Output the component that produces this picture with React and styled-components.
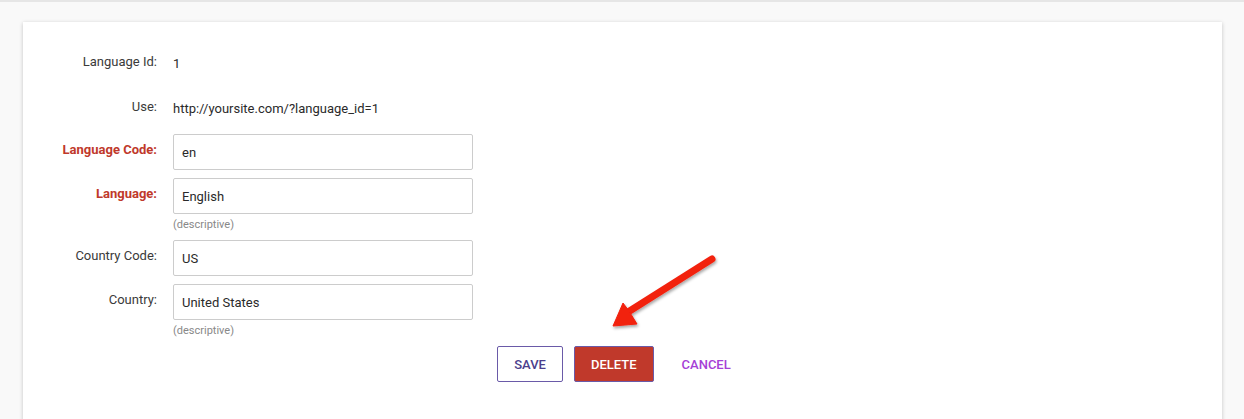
import React from 'react';
import styled, { createGlobalStyle } from 'styled-components';

const Global = createGlobalStyle`
    body {
        margin: 0;
        background: #f9f9f9;
        font-family: Roboto, "Liberation Sans", sans-serif;
    }
`

const Page = styled.div`
    border-top: 2px solid #e6e6e6;
    padding: 20px 22px 0 23px;
    height: 417px;
    overflow: hidden;
`

const Card = styled.div`
    position: relative;
    background: #fff;
    box-shadow: 0 1px 4px rgba(0, 0, 0, 0.22);
    min-height: 420px;
    padding-top: 30px;
`

const Row = styled.div`
    display: grid;
    grid-template-columns: 134px 300px;
    column-gap: 16px;
    margin-top: ${p => p.gap}px;
`

const Label = styled.div`
    text-align: right;
    font-size: 13px;
    line-height: 20px;
    padding-top: ${p => (p.input ? 6 : 0)}px;
    color: ${p => (p.required ? '#c0392b' : '#3a3a3a')};
    font-weight: ${p => (p.required ? 700 : 400)};
`

const Value = styled.div`
    font-size: 13px;
    line-height: 20px;
    padding-top: 2px;
    color: #2a2a2a;
`

const Input = styled.input`
    box-sizing: border-box;
    width: 300px;
    height: 36px;
    border: 1px solid #ccc;
    border-radius: 2px;
    padding: 0 8px;
    font-family: Roboto, "Liberation Sans", sans-serif;
    font-size: 13px;
    color: #2a2a2a;
    outline: none;
`

const Help = styled.div`
    grid-column: 2;
    font-size: 11px;
    line-height: 14px;
    color: #888;
    margin-top: 4px;
`

const Buttons = styled.div`
    display: flex;
    justify-content: center;
    align-items: center;
    gap: 11px;
    margin-top: 8px;
`

const Button = styled.button`
    height: 36px;
    padding: 0 ${p => p.pad}px;
    font-family: Roboto, "Liberation Sans", sans-serif;
    font-size: 13px;
    font-weight: 500;
    text-transform: uppercase;
    border-radius: 2px;
    cursor: pointer;
    border: 1px solid ${p => (p.kind === 'link' ? 'transparent' : '#6a5aa8')};
    background: ${p => (p.kind === 'danger' ? '#c0392b' : p.kind === 'link' ? 'transparent' : '#fff')};
    color: ${p => (p.kind === 'danger' ? '#fff' : p.kind === 'link' ? '#a640d6' : '#4b3e8c')};
`

const Arrow = styled.svg`
    position: absolute;
    left: 567px;
    top: 223px;
    overflow: visible;
`

const FieldRow = ({gap, label, required, value, help}) => (
    <Row gap={gap}>
        <Label input required={required}>{label}</Label>
        <Input defaultValue={value} />
        {help && <Help>{help}</Help>}
    </Row>
)

const App = () => {
    return (
        <Page>
            <Global />
            <Card>
                <Row gap={0}>
                    <Label>Language Id:</Label>
                    <Value>1</Value>
                </Row>
                <Row gap={23}>
                    <Label>Use:</Label>
                    <Value>http://yoursite.com/?language_id=1</Value>
                </Row>
                <FieldRow gap={15} label="Language Code:" required value="en" />
                <FieldRow gap={8} label="Language:" required value="English" help="(descriptive)" />
                <FieldRow gap={8} label="Country Code:" value="US" />
                <FieldRow gap={8} label="Country:" value="United States" help="(descriptive)" />
                <Buttons>
                    <Button pad={16}>Save</Button>
                    <Button kind="danger" pad={16}>Delete</Button>
                    <Button kind="link" pad={16}>Cancel</Button>
                </Buttons>
                <Arrow width="130" height="95" viewBox="0 0 130 95">
                    <defs>
                        <filter id="sh" x="-20%" y="-20%" width="140%" height="140%">
                            <feDropShadow dx="1" dy="2" stdDeviation="1.5" floodColor="#000" floodOpacity="0.35" />
                        </filter>
                    </defs>
                    <g filter="url(#sh)" fill="#f2200e" stroke="#f2200e">
                        <line x1="122" y1="14" x2="38" y2="67" strokeWidth="7" strokeLinecap="round" />
                        <polygon points="23,81 33,58 39,66 47,79" strokeWidth="1" strokeLinejoin="round" />
                    </g>
                </Arrow>
            </Card>
        </Page>
    );
}

export default App;
